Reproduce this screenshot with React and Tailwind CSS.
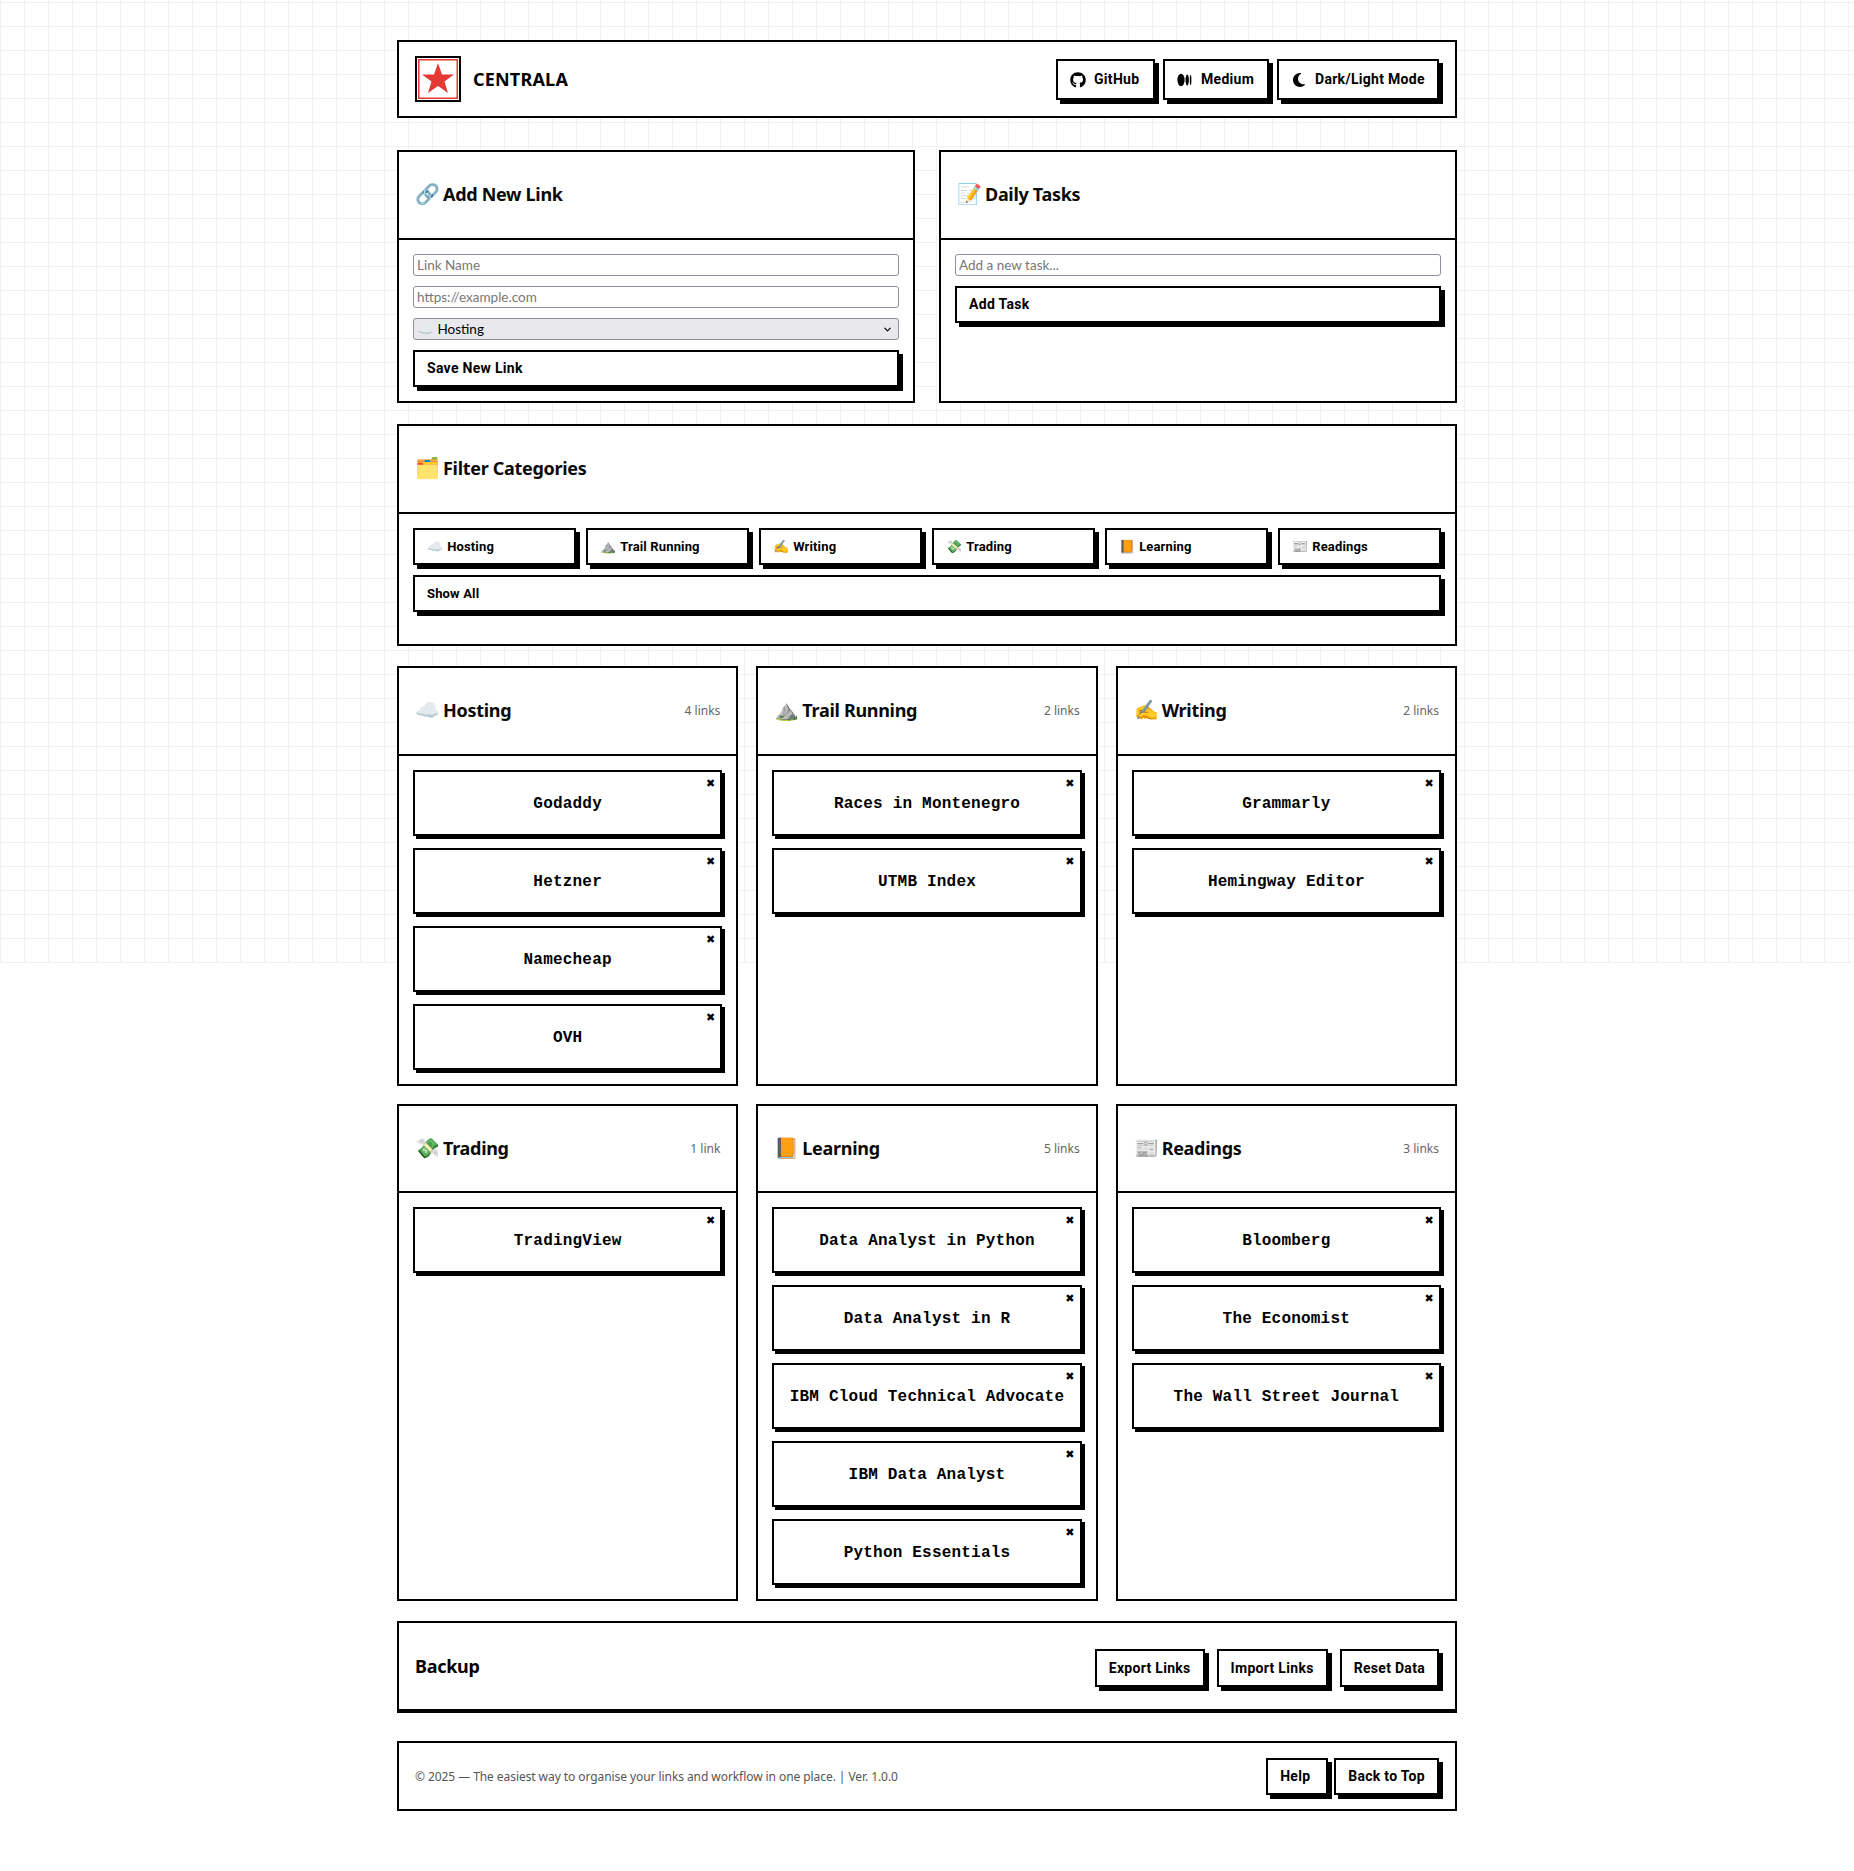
import { FaGithub } from "react-icons/fa";
import { FaMoon } from "react-icons/fa6";
import { ChevronDown } from "lucide-react";

const sans = "font-['Noto_Sans','Roboto',sans-serif]";
const mono = "font-['Liberation_Mono','DejaVu_Sans_Mono',monospace]";

const categories = [
  { name: "Hosting", emoji: "☁️", links: ["Godaddy", "Hetzner", "Namecheap", "OVH"] },
  { name: "Trail Running", emoji: "⛰️", links: ["Races in Montenegro", "UTMB Index"] },
  { name: "Writing", emoji: "✍️", links: ["Grammarly", "Hemingway Editor"] },
  { name: "Trading", emoji: "💸", links: ["TradingView"] },
  { name: "Learning", emoji: "📙", links: ["Data Analyst in Python", "Data Analyst in R", "IBM Cloud Technical Advocate", "IBM Data Analyst", "Python Essentials"] },
  { name: "Readings", emoji: "📰", links: ["Bloomberg", "The Economist", "The Wall Street Journal"] },
];

const Button = ({ children, className = "", size = "text-sm tracking-[0.3px] pt-[1px]" }) => (
  <button className={`flex items-center border-2 border-black bg-white px-3 text-left font-['Roboto',sans-serif] font-bold leading-[21px] shadow-[4px_4px_0_#000] ${size} ${className}`}>
    {children}
  </button>
);

const CardHeader = ({ emoji, title, count }) => (
  <div className="flex h-[87.5px] items-center justify-between border-b-2 border-black px-4">
    <h2 className="flex items-center gap-[8px] pb-[1px] text-lg font-bold tracking-[-0.3px] text-[#0a0a0a]">
      <span className="w-[20px] text-center text-[20px] leading-none">{emoji}</span>
      {title}
    </h2>
    {count && <span className="pt-[1px] text-xs text-[#666]">{count}</span>}
  </div>
);

const Field = ({ placeholder }) => (
  <input
    placeholder={placeholder}
    className="block h-[22px] w-full rounded-[3px] border border-[#8f8f9d] bg-white px-[3px] font-['Lato',sans-serif] text-[13.5px] placeholder:text-[#777]"
  />
);

const LinkItem = ({ name }) => (
  <div className={`relative flex h-[66px] items-center justify-center border-2 border-black bg-white pt-[2px] text-base font-bold tracking-[0.2px] shadow-[3px_3px_0_#000] ${mono}`}>
    {name}
    <span className="absolute right-[5px] top-[2px] font-['DejaVu_Sans',sans-serif] text-[11px] leading-[20px]">✖</span>
  </div>
);

export default function App() {
  return (
    <div className={`relative min-h-[1871px] bg-white text-black ${sans}`}>
      <div className="absolute inset-x-0 top-0 h-[963px] bg-[linear-gradient(#f1f1f1_1px,transparent_1px),linear-gradient(90deg,#f1f1f1_1px,transparent_1px)] bg-[size:24px_24px] bg-[position:0_2px]"></div>

      <div className="relative mx-auto w-[1060px] pb-[60px] pt-10">
        {/* Header */}
        <header className="flex h-[78px] items-center justify-between border-2 border-black bg-white px-4">
          <div className="flex items-center gap-3">
            <svg width="46" height="46" viewBox="0 0 46 46">
              <rect x="1" y="1" width="44" height="44" fill="#fff" stroke="#000" strokeWidth="2" />
              <rect x="3.75" y="3.75" width="38.5" height="38.5" fill="#fff" stroke="#e53935" strokeWidth="1.5" />
              <polygon points="23,7 27,18.5 39,18.5 29.5,25.6 33,37 23,30 13,37 16.5,25.6 7,18.5 19,18.5" fill="#e53935" />
            </svg>
            <span className="text-lg font-bold tracking-[0.2px]">CENTRALA</span>
          </div>
          <div className="flex items-center gap-2">
            <Button className="h-[41px] w-[99px] gap-2"><FaGithub className="h-4 w-4" />GitHub</Button>
            <Button className="h-[41px] w-[106px] gap-2">
              <svg width="16" height="16" viewBox="0 0 16 16" fill="currentColor">
                <ellipse cx="4" cy="8" rx="3.6" ry="6.2" />
                <ellipse cx="10.2" cy="8" rx="1.7" ry="5.6" />
                <ellipse cx="13.6" cy="8" rx="0.8" ry="5" />
              </svg>
              Medium
            </Button>
            <Button className="h-[41px] w-[162px] gap-2"><FaMoon className="h-4 w-4" />Dark/Light Mode</Button>
          </div>
        </header>

        {/* Add link + tasks */}
        <div className="mt-8 grid grid-cols-2 gap-6">
          <section className="h-[253px] border-2 border-black bg-white">
            <CardHeader emoji="🔗" title="Add New Link" />
            <div className="flex flex-col gap-[10px] p-[14px]">
              <Field placeholder="Link Name" />
              <Field placeholder="https://example.com" />
              <div className="relative">
                <select className="block h-[22px] w-full appearance-none rounded-[3px] border border-[#8f8f9d] bg-[#e9e9ed] px-[3px] font-['Lato',sans-serif] text-[13.5px]">
                  <option>☁️ Hosting</option>
                </select>
                <ChevronDown className="absolute right-[6px] top-[6px] h-[11px] w-[11px]" strokeWidth={2.5} />
              </div>
              <Button className="h-[37px] w-full">Save New Link</Button>
            </div>
          </section>
          <section className="h-[253px] border-2 border-black bg-white">
            <CardHeader emoji="📝" title="Daily Tasks" />
            <div className="flex flex-col gap-[10px] p-[14px]">
              <Field placeholder="Add a new task..." />
              <Button className="h-[37px] w-full">Add Task</Button>
            </div>
          </section>
        </div>

        {/* Filters */}
        <section className="mt-[21px] h-[222px] border-2 border-black bg-white">
          <CardHeader emoji="🗂️" title="Filter Categories" />
          <div className="p-[14px]">
            <div className="grid grid-cols-6 gap-[10px]">
              {categories.map((cat) => (
                <Button key={cat.name} size="text-[13px] tracking-[0.15px]" className="h-[37px] gap-[4px]">
                  <span>{cat.emoji}</span>{cat.name}
                </Button>
              ))}
            </div>
            <Button size="text-[13px] tracking-[0.15px]" className="mt-[10px] h-[37px] w-full">Show All</Button>
          </div>
        </section>

        {/* Categories */}
        <div className="mt-5 grid grid-cols-3 gap-[18px]">
          {categories.map((cat) => (
            <section key={cat.name} className="border-2 border-black bg-white">
              <CardHeader
                emoji={cat.emoji}
                title={cat.name}
                count={`${cat.links.length} ${cat.links.length === 1 ? "link" : "links"}`}
              />
              <div className="flex flex-col gap-3 p-[14px]">
                {cat.links.map((link) => <LinkItem key={link} name={link} />)}
              </div>
            </section>
          ))}
        </div>

        {/* Backup */}
        <section className="mt-5 flex h-[92px] items-center justify-between border-2 border-b-4 border-black bg-white px-4">
          <h2 className="text-lg font-bold tracking-[-0.3px]">Backup</h2>
          <div className="mt-1 flex gap-3">
            <Button className="h-[38px]">Export Links</Button>
            <Button className="h-[38px]">Import Links</Button>
            <Button className="h-[38px]">Reset Data</Button>
          </div>
        </section>

        {/* Footer */}
        <footer className="mt-7 flex h-[70px] items-center justify-between border-2 border-black bg-white px-4">
          <p className="mt-[1px] text-xs tracking-[-0.07px] text-[#555]">© 2025 — The easiest way to organise your links and workflow in one place. | Ver. 1.0.0</p>
          <div className="flex gap-[6px]">
            <Button className="h-[37px] w-[62px]">Help</Button>
            <Button className="h-[37px]">Back to Top</Button>
          </div>
        </footer>
      </div>
    </div>
  );
}
